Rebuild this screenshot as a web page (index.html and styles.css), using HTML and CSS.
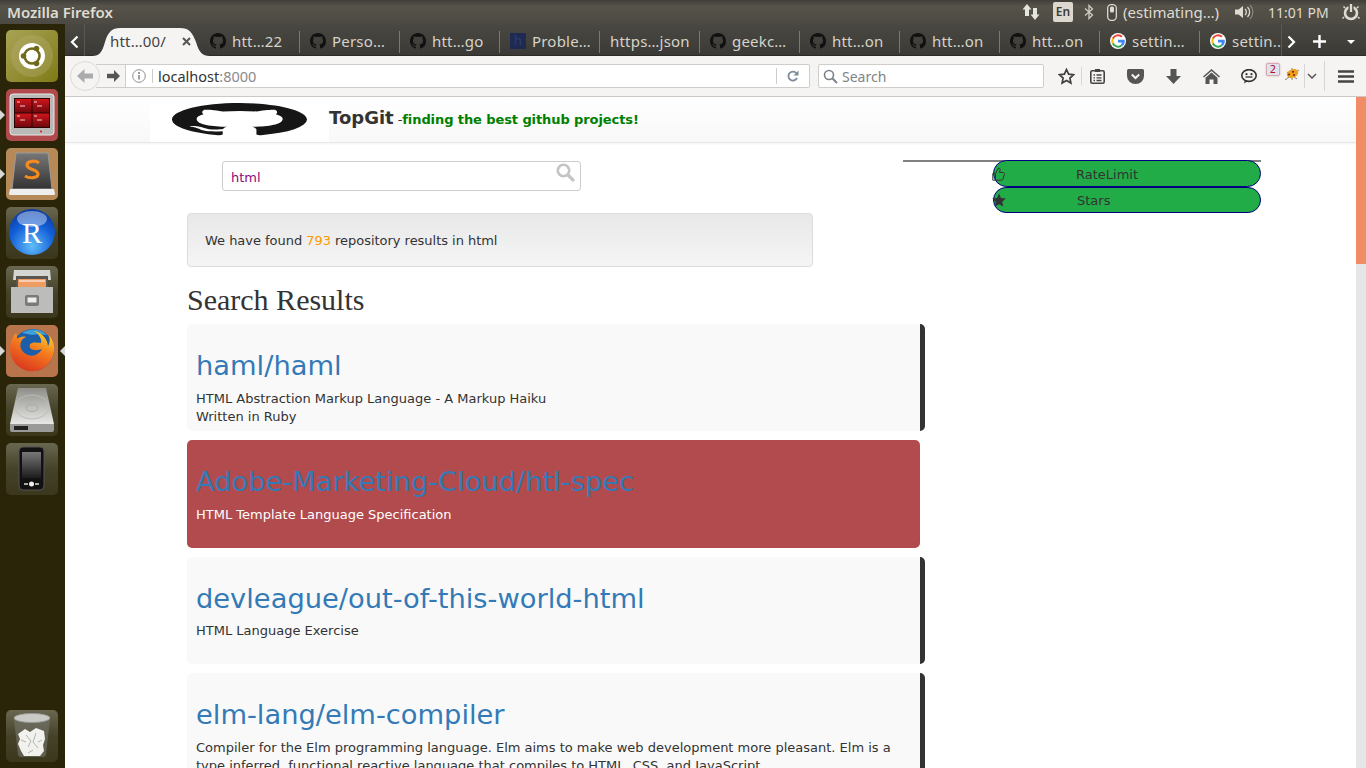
FILE: index.html
```html
<!DOCTYPE html>
<html lang="en">
  <head>
    <meta charset="UTF-8" />
    <title>TopGit</title>
    <link rel="stylesheet" href="styles.css">
  </head>
  <body>
    <svg class="defs" width="0" height="0">
      <symbol id="octo" viewBox="0 0 16 16" preserveAspectRatio="none">
        <path fill-rule="evenodd" d="M8 0C3.58 0 0 3.58 0 8c0 3.54 2.29 6.53 5.47 7.59.4.07.55-.17.55-.38 0-.19-.01-.82-.01-1.49-2.01.37-2.53-.49-2.69-.94-.09-.23-.48-.94-.82-1.13-.28-.15-.68-.52-.01-.53.63-.01 1.08.58 1.23.82.72 1.21 1.87.87 2.33.66.07-.52.28-.87.51-1.07-1.78-.2-3.64-.89-3.64-3.95 0-.87.31-1.59.82-2.15-.08-.2-.36-1.02.08-2.12 0 0 .67-.21 2.2.82.64-.18 1.32-.27 2-.27.68 0 1.36.09 2 .27 1.53-1.04 2.2-.82 2.2-.82.44 1.1.16 1.92.08 2.12.51.56.82 1.27.82 2.15 0 3.07-1.87 3.75-3.65 3.95.29.25.54.73.54 1.48 0 1.07-.01 1.93-.01 2.2 0 .21.15.46.55.38A8.013 8.013 0 0016 8c0-4.42-3.58-8-8-8z"/>
      </symbol>
      <symbol id="goog" viewBox="0 0 16 16">
        <circle cx="8" cy="8" r="8" fill="#fff"/>
        <path d="M8 3.200a4.800 4.800 0 0 1 3.200 1.200l1.400-1.400A6.800 6.800 0 0 0 2 5l1.700 1.300A4.800 4.800 0 0 1 8 3.200z" fill="#ea4335"/>
        <path d="M3.700 6.300 2 5a6.800 6.800 0 0 0 0 6l1.700-1.300a4.800 4.800 0 0 1 0-3.400z" fill="#fbbc05"/>
        <path d="M3.700 9.700 2 11a6.800 6.800 0 0 0 10.500 2.100l-1.600-1.300A4.800 4.800 0 0 1 3.700 9.700z" fill="#34a853"/>
        <path d="M14.700 6.800H8v2.700h3.800a3.300 3.300 0 0 1-.9 2.300l1.600 1.300a6.800 6.800 0 0 0 2.200-6.300z" fill="#4285f4"/>
      </symbol>
    </svg>

    <div class="screen">
      <div class="titlebar">
        <span class="app-name">Mozilla Firefox</span>
        <div class="tray">
          <svg class="tray-arrows" width="18" height="18" viewBox="0 0 18 18"><path d="M5 1 .5 6.500H3V13h4V6.500h2.500zM13 17l4.500-5.500H15V5h-4v6.500H8.500z" fill="#e6e4de"/></svg>
          <span class="tray-lang">En</span>
          <svg class="tray-bt" width="10" height="16" viewBox="0 0 10 16"><path d="M1 4.500 8.500 11 5 14.500v-13L8.500 5 1 11.500" fill="none" stroke="#cfccc4" stroke-width="1.300"/></svg>
          <svg class="tray-mouse" width="10" height="17" viewBox="0 0 10 17"><rect x=".7" y=".7" width="8.600" height="15.600" rx="3.500" fill="#4a4842" stroke="#dedbd3" stroke-width="1.300"/><rect x="3" y="2.500" width="4" height="6" rx="1.500" fill="#dedbd3"/></svg>
          <span class="tray-text tray-est">(estimating…)</span>
          <svg class="tray-vol" width="20" height="16" viewBox="0 0 20 16"><path d="M1 5.500h3.500L9 2v12l-4.500-3.500H1z" fill="#dedbd3"/><path d="M11 5a4 4 0 0 1 0 6M13.500 3a7 7 0 0 1 0 10" fill="none" stroke="#dedbd3" stroke-width="1.300"/><path d="M16 1a10 10 0 0 1 0 14" fill="none" stroke="#8b887f" stroke-width="1.200"/></svg>
          <span class="tray-text tray-time">11:01 PM</span>
          <svg class="tray-power" width="18" height="18" viewBox="0 0 18 18"><circle cx="9" cy="10" r="6" fill="none" stroke="#dedbd3" stroke-width="2.600"/><path d="M9 1v8" stroke="#4a4842" stroke-width="5"/><path d="M9 1v8" stroke="#dedbd3" stroke-width="2.400"/><path d="M2 14l-1.500 1.500M16 14l1.500 1.500M3 5 1.500 3.500M15 5l1.500-1.500" stroke="#dedbd3" stroke-width="1.500"/></svg>
        </div>
      </div>

      <div class="desktop">
        <aside class="dock">
          <svg class="launcher" viewBox="0 0 52 52">
            <defs><linearGradient id="ub" x1="0" y1="0" x2="1" y2="1"><stop offset="0" stop-color="#a9a456"/><stop offset="1" stop-color="#7f7a16"/></linearGradient></defs>
            <rect width="52" height="52" rx="5" fill="url(#ub)"/>
            <circle cx="26" cy="26" r="21" fill="#b7b375" opacity=".35"/>
            <circle cx="26" cy="26" r="13" fill="#fff"/>
            <circle cx="26" cy="26" r="7.500" fill="none" stroke="#6f6a1c" stroke-width="2.600"/>
            <circle cx="17.500" cy="26" r="2.800" fill="#6f6a1c"/><circle cx="30.500" cy="18.500" r="2.800" fill="#6f6a1c"/><circle cx="30.500" cy="33.500" r="2.800" fill="#6f6a1c"/>
          </svg>
          <div class="launcher-wrap pip">
            <svg class="launcher" viewBox="0 0 52 52">
              <defs><linearGradient id="tp" x1="0" y1="0" x2="0" y2="1"><stop offset="0" stop-color="#d0141c"/><stop offset="1" stop-color="#6e0a0e"/></linearGradient></defs>
              <rect width="52" height="52" rx="5" fill="#b04a4c"/>
              <rect x="4" y="5" width="44" height="41" rx="3" fill="#b9b9b7" stroke="#e8e8e6"/>
              <rect x="8" y="9" width="36" height="30" fill="#2a0304"/>
              <rect x="9" y="10" width="16.500" height="13.500" fill="url(#tp)"/><rect x="26.500" y="10" width="16.500" height="13.500" fill="url(#tp)"/>
              <rect x="9" y="24.500" width="16.500" height="13.500" fill="url(#tp)"/><rect x="26.500" y="24.500" width="16.500" height="13.500" fill="url(#tp)"/>
              <path d="M11 13h3M11 27h3M28 13h3M28 27h3M14 17h5M14 31h5M31 17h5M31 31h5" stroke="#fff" stroke-width=".8"/>
              <circle cx="35" cy="42.500" r="1" fill="#e11"/>
            </svg>
          </div>
          <div class="launcher-wrap pip">
            <svg class="launcher" viewBox="0 0 52 52">
              <defs><linearGradient id="sl" x1="0" y1="0" x2="0" y2="1"><stop offset="0" stop-color="#777"/><stop offset="1" stop-color="#333"/></linearGradient></defs>
              <rect width="52" height="52" rx="5" fill="#b58a58"/>
              <path d="M10 5h32l4 36H6z" fill="url(#sl)" stroke="#999"/>
              <path d="M4 41h44l1 5a1 1 0 0 1-1 1H4a1 1 0 0 1-1-1z" fill="#eee"/>
              <path d="M33 15c-4-3-12-2-12 2 0 5 11 4 11 9 0 4-8 5-13 2" fill="none" stroke="#f58a1f" stroke-width="3.200"/>
            </svg>
          </div>
          <svg class="launcher" viewBox="0 0 52 52">
            <defs><radialGradient id="rb" cx=".5" cy=".8" r=".8"><stop offset="0" stop-color="#62bdf8"/><stop offset=".6" stop-color="#1360d8"/><stop offset="1" stop-color="#0a3aa0"/></radialGradient><linearGradient id="tile" x1="0" y1="0" x2="0" y2="1"><stop offset="0" stop-color="#6a6750"/><stop offset=".5" stop-color="#45422a"/><stop offset="1" stop-color="#3a371d"/></linearGradient></defs>
            <rect width="52" height="52" rx="5" fill="url(#tile)"/>
            <circle cx="26" cy="25" r="23" fill="url(#rb)"/>
            <ellipse cx="26" cy="12" rx="15" ry="8" fill="#fff" opacity=".4"/>
            <text class="r-mark" x="26" y="36" text-anchor="middle">R</text>
          </svg>
          <svg class="launcher" viewBox="0 0 52 52">
            <rect width="52" height="52" rx="5" fill="url(#tile)"/>
            <path d="M8 4h36l1 10H7z" fill="#d5d5d3"/>
            <rect x="10" y="10" width="32" height="12" fill="#5a5650"/>
            <rect x="12" y="13" width="28" height="9" fill="#ef9c62"/>
            <path d="M13 15h26" stroke="#fff" stroke-width="1"/>
            <path d="M5 21h42v26H5z" fill="#bcbcba"/>
            <rect x="19" y="29" width="14" height="11" rx="2" fill="#7a7a78"/>
            <rect x="21.500" y="31.500" width="9" height="5" fill="#eee"/>
          </svg>
          <div class="launcher-wrap pip pip-both">
            <svg class="launcher" viewBox="0 0 52 52">
              <defs><linearGradient id="fx" x1=".8" y1="0" x2=".3" y2="1"><stop offset="0" stop-color="#ffd52a"/><stop offset=".45" stop-color="#f47a1e"/><stop offset="1" stop-color="#d8341f"/></linearGradient></defs>
              <rect width="52" height="52" rx="5" fill="#b8754c"/>
              <circle cx="27" cy="25" r="21" fill="#1c5fa8"/>
              <path d="M16 8c7-5 18-5 25 2-6-1-11-1-15 0z" fill="#3da0d8"/>
              <path d="M10 8c-6 7-8 16-4 25 5 11 17 16 28 12 10-4 15-14 14-24-1-5-3-8-5-11 1 4 1 8-1 11-1-9-8-14-14-15 5 3 8 8 7 12-3 0-6-1-9 0-3 1-3 4-1 6 3 2 8 1 11 0-3 5-8 8-14 6-6-2-9-8-7-13 1-3 3-4 5-5-3-1-7 0-9 2 0-2 0-4-1-6z" fill="url(#fx)"/>
            </svg>
          </div>
          <svg class="launcher" viewBox="0 0 52 52">
            <defs><linearGradient id="hd" x1="0" y1="0" x2="0" y2="1"><stop offset="0" stop-color="#8e8e88"/><stop offset="1" stop-color="#e8e8e6"/></linearGradient></defs>
            <rect width="52" height="52" rx="5" fill="url(#tile)"/>
            <path d="M12 4h28l8 36H4z" fill="url(#hd)"/>
            <ellipse cx="26" cy="23" rx="17" ry="12" fill="none" stroke="#bbb"/>
            <ellipse cx="26" cy="24" rx="6" ry="3.500" fill="none" stroke="#aaa"/>
            <path d="M4 40h44v6a2 2 0 0 1-2 2H6a2 2 0 0 1-2-2z" fill="#9a9a98"/>
            <rect x="8" y="42" width="14" height="4" fill="#222"/>
          </svg>
          <svg class="launcher" viewBox="0 0 52 52">
            <defs><linearGradient id="ph" x1="0" y1="0" x2="0" y2="1"><stop offset="0" stop-color="#777"/><stop offset="1" stop-color="#1c1c1c"/></linearGradient></defs>
            <rect width="52" height="52" rx="5" fill="url(#tile)"/>
            <rect x="13" y="4" width="25" height="43" rx="4" fill="#111" stroke="#555"/>
            <rect x="16" y="9" width="19" height="26" fill="url(#ph)"/>
            <circle cx="25.500" cy="41" r="2.500" fill="#eee"/>
            <path d="M18 41h4M29 41h4" stroke="#ddd" stroke-width="1.600"/>
          </svg>
          <svg class="launcher launcher-trash" viewBox="0 0 52 52">
            <rect width="52" height="52" rx="5" fill="url(#tile)"/>
            <path d="M8 9l4 36a3 3 0 0 0 3 2h22a3 3 0 0 0 3-2l4-36z" fill="#77776a" opacity=".6"/>
            <ellipse cx="26" cy="8" rx="18" ry="4.500" fill="#c9c9c5" stroke="#999"/>
            <path d="M12 24l7-5 5 3 6-4 8 3 1 8-2 6 1 6-4 5H18l-3-5-3-7 2-5z" fill="#f1f1ed"/>
            <path d="M20 25l5 6-3 6M30 23l-3 9 5 6M15 30l5 2M36 30l-4 2M22 43l5-3" fill="none" stroke="#aaa" stroke-width=".9"/>
          </svg>
        </aside>

        <div class="browser">
          <div class="tabbar">
            <button class="tab-scroll tab-scroll-left"><svg width="9" height="14" viewBox="0 0 9 14"><path d="M7.500 1.500 2 7l5.500 5.500" fill="none" stroke="#fff" stroke-width="2.200"/></svg></button>
            <div class="tab tab-active">
              <span class="tab-label">htt…00/</span>
              <svg class="tab-close" width="9" height="9" viewBox="0 0 9 9"><path d="M1 1l7 7M8 1 1 8" stroke="#555" stroke-width="2"/></svg>
            </div>
            <div class="tab"><svg class="tab-icon octo" width="16" height="16"><use href="#octo"/></svg><span class="tab-label">htt…22</span></div>
            <div class="tab"><svg class="tab-icon octo" width="16" height="16"><use href="#octo"/></svg><span class="tab-label">Perso…</span></div>
            <div class="tab"><svg class="tab-icon octo" width="16" height="16"><use href="#octo"/></svg><span class="tab-label">htt…go</span></div>
            <div class="tab"><span class="tab-icon hacker">h</span><span class="tab-label">Proble…</span></div>
            <div class="tab"><span class="tab-label">https…json</span></div>
            <div class="tab"><svg class="tab-icon octo" width="16" height="16"><use href="#octo"/></svg><span class="tab-label">geekc…</span></div>
            <div class="tab"><svg class="tab-icon octo" width="16" height="16"><use href="#octo"/></svg><span class="tab-label">htt…on</span></div>
            <div class="tab"><svg class="tab-icon octo" width="16" height="16"><use href="#octo"/></svg><span class="tab-label">htt…on</span></div>
            <div class="tab"><svg class="tab-icon octo" width="16" height="16"><use href="#octo"/></svg><span class="tab-label">htt…on</span></div>
            <div class="tab"><svg class="tab-icon" width="16" height="16"><use href="#goog"/></svg><span class="tab-label">settin…</span></div>
            <div class="tab tab-last"><svg class="tab-icon" width="16" height="16"><use href="#goog"/></svg><span class="tab-label">settin..</span></div>
            <button class="tab-scroll tab-scroll-right"><svg width="9" height="14" viewBox="0 0 9 14"><path d="M1.500 1.500 7 7l-5.500 5.500" fill="none" stroke="#fff" stroke-width="2.200"/></svg></button>
            <button class="tab-new"><svg width="13" height="13" viewBox="0 0 13 13"><path d="M6.500 0v13M0 6.500h13" stroke="#fff" stroke-width="2.400"/></svg></button>
            <span class="tab-menu"></span>
          </div>

          <div class="navbar">
            <button class="back"><svg width="16" height="14" viewBox="0 0 16 14"><path d="M7.500 0 0 7l7.500 7V9.500H16v-5H7.500z" fill="#a9abad"/></svg></button>
            <div class="urlbar">
              <span class="forward"><svg width="13" height="12" viewBox="0 0 13 12"><path d="M7 0l6 6-6 6V8.200H0V3.800h7z" fill="#555"/></svg></span>
              <span class="info"><svg width="14" height="14" viewBox="0 0 14 14"><circle cx="7" cy="7" r="6.300" fill="none" stroke="#8e8e8e"/><path d="M7 6v4.500" stroke="#777" stroke-width="1.400"/><circle cx="7" cy="3.900" r="1" fill="#777"/></svg></span>
              <span class="url">localhost<span class="url-port">:8000</span></span>
              <span class="reload"><svg width="12" height="12" viewBox="0 0 12 12"><path d="M10 8a4.500 4.500 0 1 1-.6-4.800" fill="none" stroke="#7c8b9a" stroke-width="1.800"/><path d="M11.500 .5v5h-5z" fill="#7c8b9a"/></svg></span>
            </div>
            <div class="searchbar">
              <svg width="15" height="15" viewBox="0 0 15 15"><circle cx="6" cy="6" r="4.500" fill="none" stroke="#7c8288" stroke-width="1.600"/><path d="M9.500 9.500l4.500 4.500" stroke="#7c8288" stroke-width="2"/></svg>
              <span>Search</span>
            </div>
            <div class="tools">
              <span class="tool tool-star"><svg width="17" height="17" viewBox="0 0 17 17"><path d="M8.500 1.500l2.100 4.600 5 .6-3.700 3.400 1 5-4.400-2.500-4.400 2.500 1-5L1.400 6.700l5-.6z" fill="none" stroke="#3f3f3f" stroke-width="1.700"/></svg></span>
              <span class="tool-sep"></span>
              <span class="tool tool-clip"><svg width="15" height="16" viewBox="0 0 15 16"><rect x=".8" y="2.800" width="13.400" height="12.400" rx="1.500" fill="none" stroke="#444" stroke-width="1.600"/><rect x="5" y="1" width="5" height="3" fill="#444"/><path d="M3.500 7h1.500M6.500 7h5M3.500 9.800h1.500M6.500 9.800h5M3.500 12.500h1.500M6.500 12.500h5" stroke="#444" stroke-width="1.300"/></svg></span>
              <span class="tool tool-pocket"><svg width="17" height="15" viewBox="0 0 17 15"><path d="M1.500 0h14A1.500 1.500 0 0 1 17 1.500V7a8.500 8 0 0 1-17 0V1.500A1.500 1.500 0 0 1 1.500 0z" fill="#555"/><path d="M4.800 5.500 8.500 9l3.700-3.500" fill="none" stroke="#f5f4f2" stroke-width="2"/></svg></span>
              <span class="tool"><svg width="15" height="15" viewBox="0 0 15 15"><path d="M4.500 0h6v7H15l-7.500 8L0 7h4.500z" fill="#555"/></svg></span>
              <span class="tool"><svg width="17" height="15" viewBox="0 0 17 15"><path d="M8.500 0 17 7.500l-1 1-7.500-6.500L1 8.500l-1-1zM8.500 3.500 14.500 8.800V15h-4v-4.500h-4V15h-4V8.800z" fill="#555"/></svg></span>
              <span class="tool tool-chat"><svg width="16" height="15" viewBox="0 0 16 15"><ellipse cx="8" cy="6.500" rx="7.200" ry="5.900" fill="none" stroke="#333" stroke-width="1.600"/><path d="M4 11l-1 3.500 4-2.500" fill="#333"/><circle cx="5.500" cy="5.200" r="1.100" fill="#333"/><circle cx="10.500" cy="5.200" r="1.100" fill="#333"/><path d="M4.500 8h7" stroke="#333" stroke-width="1.300"/></svg></span>
              <span class="tool tool-firebug">
                <span class="badge">2</span>
                <svg class="bug" width="16" height="14" viewBox="0 0 16 14"><path d="M1 13 15 3M3 5l10 7M8 1v12" stroke="#665" stroke-width=".8"/><ellipse cx="8.500" cy="6.500" rx="6" ry="4.200" transform="rotate(-25 8.500 6.500)" fill="#f0a01e"/><circle cx="5" cy="7.500" r="1.100" fill="#7a2f0a"/><circle cx="9" cy="4.800" r="1.100" fill="#7a2f0a"/><circle cx="10" cy="8" r="1.100" fill="#7a2f0a"/></svg>
              </span>
              <span class="tool tool-more"><svg width="10" height="6" viewBox="0 0 10 6"><path d="M1 1l4 4 4-4" fill="none" stroke="#555" stroke-width="1.500"/></svg></span>
              <span class="tool-sep tool-sep-tall"></span>
              <span class="tool tool-menu"><svg width="16" height="13" viewBox="0 0 16 13"><path d="M0 1.500h16M0 6.500h16M0 11.500h16" stroke="#444" stroke-width="2.400"/></svg></span>
            </div>
          </div>

          <div class="viewport">
            <div class="page">
              <header class="site-header">
                <div class="logo-box">
                  <svg class="logo" width="135" height="33"><use href="#octo" width="135" height="33"/></svg>
                </div>
                <h1 class="brand">TopGit</h1>
                <span class="tagline"><span class="dash">-</span>finding the best github projects!</span>
              </header>

              <div class="toolbar-row">
                <form class="site-search">
                  <span class="site-search-text">html</span>
                  <svg class="site-search-icon" width="19" height="19" viewBox="0 0 19 19"><circle cx="7.500" cy="7.500" r="5.700" fill="none" stroke="#c4c4c4" stroke-width="2.600"/><path d="M12 12l6 6" stroke="#c4c4c4" stroke-width="3.200"/></svg>
                </form>
                <div class="sidebar">
                  <a class="pill pill-rate">
                    <svg class="pill-icon" width="13" height="14" viewBox="0 0 13 14"><path d="M.8 6.500h2.700v6.700H.8zM3.500 6.500 6.500 1c1.500 0 2 1.300 1.500 2.700L7.500 5.500h3.700c1 0 1.500 1 1.200 1.800l-1.600 5c-.2.600-.7.900-1.300.9H3.500" fill="none" stroke="#333" stroke-width="1"/></svg>
                    <span>RateLimit</span>
                  </a>
                  <a class="pill pill-stars">
                    <svg class="pill-icon" width="14" height="14" viewBox="0 0 14 14"><path d="M7 .5l2 4.400 4.800.6-3.500 3.300.9 4.700L7 11.200l-4.200 2.300.9-4.700L.2 5.500 5 4.900z" fill="#333"/></svg>
                    <span>Stars</span>
                  </a>
                </div>
              </div>

              <div class="results">
                <div class="well">We have found <span class="count">793</span> repository results in html</div>
                <h2 class="results-title">Search Results</h2>
                <article class="card">
                  <h3 class="card-title"><a>haml/haml</a></h3>
                  <p class="card-text">HTML Abstraction Markup Language - A Markup Haiku</p>
                  <p class="card-text">Written in Ruby</p>
                </article>
                <article class="card card-danger">
                  <h3 class="card-title"><a>Adobe-Marketing-Cloud/htl-spec</a></h3>
                  <p class="card-text">HTML Template Language Specification</p>
                </article>
                <article class="card">
                  <h3 class="card-title"><a>devleague/out-of-this-world-html</a></h3>
                  <p class="card-text">HTML Language Exercise</p>
                </article>
                <article class="card">
                  <h3 class="card-title"><a>elm-lang/elm-compiler</a></h3>
                  <p class="card-text">Compiler for the Elm programming language. Elm aims to make web development more pleasant. Elm is a type inferred, functional reactive language that compiles to HTML, CSS, and JavaScript.</p>
                </article>
              </div>
            </div>
            <div class="scrollbar"><div class="scrollbar-thumb"></div></div>
          </div>
        </div>
      </div>
    </div>
  </body>
</html>
```

FILE: styles.css
```css
* {
  padding: 0;
  margin: 0;
  box-sizing: border-box;
}

body {
  width: 1366px;
  height: 768px;
  overflow: hidden;
  font-family: "DejaVu Sans", sans-serif;
  background: #fff;
}

button {
  border: 0;
  background: none;
}

.defs {
  position: absolute;
}

.screen {
  height: 768px;
  display: flex;
  flex-direction: column;
}

/* top panel */
.titlebar {
  height: 24px;
  flex: none;
  display: flex;
  align-items: center;
  justify-content: space-between;
  padding-left: 7px;
  background: linear-gradient(#3f3e39, #56534a 25%, #4c4a43);
}

.app-name {
  font: 600 15px "Noto Sans", sans-serif;
  color: #dfdbd2;
}

.tray {
  display: flex;
  align-items: center;
  padding-right: 6px;
}

.tray-lang {
  width: 20px;
  height: 20px;
  margin-left: 13px;
  background: #dcd8cf;
  border-radius: 2px;
  color: #3c3b37;
  font: 600 12px/20px "Noto Sans", sans-serif;
  text-align: center;
}

.tray-bt {
  margin-left: 11px;
}

.tray-mouse {
  margin-left: 13px;
}

.tray-text {
  font: 14px "Noto Sans", sans-serif;
  color: #dfdbd2;
  white-space: nowrap;
}

.tray-est {
  margin-left: 6px;
  width: 98px;
  font-size: 15px;
}

.tray-vol {
  margin-left: 13px;
}

.tray-time {
  margin-left: 14px;
  width: 60px;
}

.tray-power {
  margin-left: 14px;
}

.desktop {
  flex: 1;
  display: flex;
  min-height: 0;
}

/* launcher */
.dock {
  width: 65px;
  flex: none;
  display: flex;
  flex-direction: column;
  gap: 7px;
  padding: 6px 0 6px 6px;
  background: #2a2508;
}

.launcher {
  display: block;
  width: 52px;
  height: 52px;
  flex: none;
}

.launcher-trash {
  margin-top: auto;
}

.launcher-wrap {
  position: relative;
}

.pip::before {
  content: "";
  position: absolute;
  left: -6px;
  top: 21px;
  border: 5px solid transparent;
  border-left-color: #d8d8d8;
}

.pip-both::after {
  content: "";
  position: absolute;
  right: 0;
  top: 21px;
  border: 5px solid transparent;
  border-right-color: #d8d8d8;
}

.r-mark {
  font: 400 30px "Liberation Serif", serif;
  fill: #fff;
}

.browser {
  flex: 1;
  min-width: 0;
  display: flex;
  flex-direction: column;
}

/* tabs */
.tabbar {
  height: 32px;
  flex: none;
  display: flex;
  align-items: stretch;
  background: linear-gradient(#4a4842, #3a3935);
  box-shadow: inset 0 -1px #2d2c29;
}

.tab-scroll {
  flex: none;
  display: flex;
  align-items: center;
  justify-content: center;
}

.tab-scroll-left {
  width: 20px;
  padding-top: 3px;
  border-right: 1px solid #5a5850;
  margin-right: 7px;
}

.tab-scroll-right {
  width: 20px;
  padding-top: 3px;
  margin-left: -2px;
  border-left: 1px solid #5a5850;
}

.tab {
  width: 100px;
  flex: none;
  display: flex;
  align-items: center;
  gap: 6px;
  padding: 2px 0 0 10px;
  position: relative;
  font: 15px "Noto Sans", sans-serif;
  letter-spacing: 0.2px;
  color: #d6d3ca;
  white-space: nowrap;
}

.tab::after {
  content: "";
  position: absolute;
  right: 0;
  top: 7px;
  bottom: 3px;
  width: 1px;
  background: #7a7870;
}

.tab-active {
  width: 118px;
  margin: 4px -10px 0 0;
  padding: 0 0 2px 18px;
  gap: 16px;
  z-index: 1;
  background: #f5f4f2;
  clip-path: path("M0 28 C8 28 10 24 13 14 C16 4 20 0 28 0 H88 C97 0 100 4 104 14 C107 24 110 28 118 28 Z");
  color: #444;
}

.tab-active::after,
.tab-last::after {
  display: none;
}

.tab-last {
  width: 83px;
  overflow: hidden;
}

.octo {
  fill: #111;
}

.logo {
  display: block;
  fill: #161616;
}

.tab-icon {
  flex: none;
}

.hacker {
  width: 16px;
  height: 16px;
  background: #1f2a52;
  color: #2e3c70;
  font: 13px/16px "DejaVu Sans", sans-serif;
  text-align: center;
}

.tab-new {
  width: 36px;
  padding-top: 3px;
  display: flex;
  align-items: center;
  justify-content: center;
}

.tab-menu {
  width: 0;
  height: 0;
  align-self: center;
  margin: 3px 0 0 10px;
  border: 4px solid transparent;
  border-top: 4px solid #fff;
  border-bottom: 0;
}

/* nav bar */
.navbar {
  height: 41px;
  flex: none;
  display: flex;
  align-items: center;
  padding: 0 0 0 5px;
  background: #f5f4f2;
  border-bottom: 1px solid #cdc8c3;
}

.back {
  width: 30px;
  height: 30px;
  flex: none;
  margin-right: -4px;
  position: relative;
  z-index: 1;
  display: flex;
  align-items: center;
  justify-content: center;
  background: #f5f4f2;
  border: 1px solid #dcdad7;
  border-radius: 50%;
}

.urlbar {
  width: 714px;
  height: 24px;
  flex: none;
  display: flex;
  align-items: center;
  background: #fff;
  border: 1px solid #cfcdc9;
  border-left: 0;
  border-radius: 0 2px 2px 0;
}

.forward {
  width: 30px;
  height: 100%;
  flex: none;
  display: flex;
  align-items: center;
  justify-content: center;
  padding-left: 6px;
  background: #f5f4f2;
  border-right: 1px solid #cfcdc9;
}

.info {
  width: 27px;
  height: 14px;
  flex: none;
  display: flex;
  justify-content: center;
  border-right: 1px solid #ccc;
}

.url {
  flex: 1;
  padding-left: 5px;
  font: 14.500px "Noto Sans", sans-serif;
  color: #333;
}

.url-port {
  color: #8a8a8a;
}

.reload {
  width: 33px;
  height: 16px;
  flex: none;
  display: flex;
  align-items: center;
  justify-content: center;
  border-left: 1px solid #ccc;
}

.searchbar {
  width: 226px;
  height: 24px;
  flex: none;
  margin-left: 8px;
  display: flex;
  align-items: center;
  gap: 4px;
  padding-left: 4px;
  background: #fff;
  border: 1px solid #cfcdc9;
  border-radius: 2px;
  font: 14px "Noto Sans", sans-serif;
  color: #808488;
}

.tools {
  display: flex;
  align-items: center;
  margin-left: 7px;
}

.tool {
  width: 38px;
  height: 24px;
  flex: none;
  display: flex;
  align-items: center;
  justify-content: center;
}

.tool-star {
  width: 30px;
}

.tool-clip {
  width: 31px;
  margin-right: 3px;
}

.tool-sep {
  width: 1px;
  height: 18px;
  flex: none;
  background: #d8d6d2;
}

.tool-sep-tall {
  height: 30px;
  margin-left: 5px;
}

.tool-firebug {
  width: 36px;
  position: relative;
}

.badge {
  position: absolute;
  left: -2px;
  top: -1px;
  width: 14px;
  height: 13px;
  background: #dfe3f0;
  border: 1px solid #d9a9b3;
  border-radius: 2px;
  box-shadow: 0 0 2px #d9a9b3;
  font: 10px/11px "DejaVu Sans", sans-serif;
  color: #b01020;
  text-align: center;
}

.bug {
  position: absolute;
  left: 16px;
  top: 3px;
}

.tool-more {
  width: 15px;
  border-left: 1px solid #d8d6d2;
}

.tool-menu {
  width: 42px;
}

/* the page itself */
.viewport {
  flex: 1;
  min-height: 0;
  display: flex;
}

.page {
  flex: 1;
  min-width: 0;
  overflow: hidden;
  font-size: 13px;
  color: #333;
}

.scrollbar {
  width: 10px;
  flex: none;
  background: #e6e6e6;
}

.scrollbar-thumb {
  height: 167px;
  background: #f08d67;
}

.site-header {
  height: 46px;
  display: flex;
  align-items: center;
  background: linear-gradient(#fff, #f8f8f8);
  border-bottom: 1px solid #e7e7e7;
  box-shadow: 0 1px 2px rgba(0, 0, 0, 0.05);
}

.logo-box {
  width: 179px;
  height: 45px;
  margin-left: 85px;
  padding: 6px 0 0 22px;
  background: #fff;
}

.brand {
  font-size: 18px;
  line-height: 42px;
  align-self: flex-start;
  color: #333;
}

.tagline {
  margin-left: 4px;
  align-self: flex-start;
  font-size: 13px;
  line-height: 45px;
  font-weight: 700;
  letter-spacing: -0.09px;
  color: #008000;
}

.dash {
  font-weight: 400;
  color: #333;
}

.toolbar-row {
  display: flex;
  padding-top: 17px;
  height: 70px;
}

.site-search {
  width: 359px;
  height: 30px;
  margin: 1px 0 0 157px;
  padding: 0 8px;
  position: relative;
  background: #fff;
  border: 1px solid #ccc;
  border-radius: 3px;
  font-size: 13px;
  line-height: 31px;
  color: #8b0a78;
}

.site-search-icon {
  position: absolute;
  right: 5px;
  top: 1px;
}

.sidebar {
  width: 358px;
  height: 53px;
  margin-left: 322px;
  padding-left: 90px;
  border-top: 2px solid #808080;
}

.pill {
  height: 27px;
  margin-top: -2px;
  display: flex;
  align-items: center;
  background: #22ac47;
  border: 1.500px solid #000080;
  border-radius: 14px;
  color: #333;
  font-size: 13px;
}

.pill-rate {
  padding-top: 1px;
}

.pill-stars {
  margin-top: 0;
  height: 26px;
  border-top-width: 1px;
}

.pill-icon {
  flex: none;
  margin-left: -2px;
}

.pill-rate span {
  margin-left: 71px;
}

.pill-stars span {
  margin-left: 71px;
}

.results {
  width: 738px;
  margin-left: 122px;
}

.well {
  width: 626px;
  height: 54px;
  padding-left: 17px;
  line-height: 54px;
  letter-spacing: -0.03px;
  background: linear-gradient(#e8e8e8, #f5f5f5);
  border: 1px solid #dcdcdc;
  border-radius: 4px;
}

.count {
  color: #f90;
}

.results-title {
  height: 57px;
  font: 400 30px/66px "Liberation Serif", serif;
  color: #333;
}

.card {
  width: 738px;
  min-height: 107.330px;
  margin-bottom: 9px;
  padding: 23px 9px 0;
  background: #f9f9f9;
  border-right: 5px solid #333;
  border-radius: 5px;
  line-height: 18px;
}

.card-danger {
  width: 733px;
  background: #b14b4e;
  border-right: 0;
  color: #fff;
}

.card-title {
  margin-bottom: 5.800px;
  font-size: 27.300px;
  font-weight: 400;
  line-height: 37px;
}

.card-title a {
  color: #337ab7;
}
```
